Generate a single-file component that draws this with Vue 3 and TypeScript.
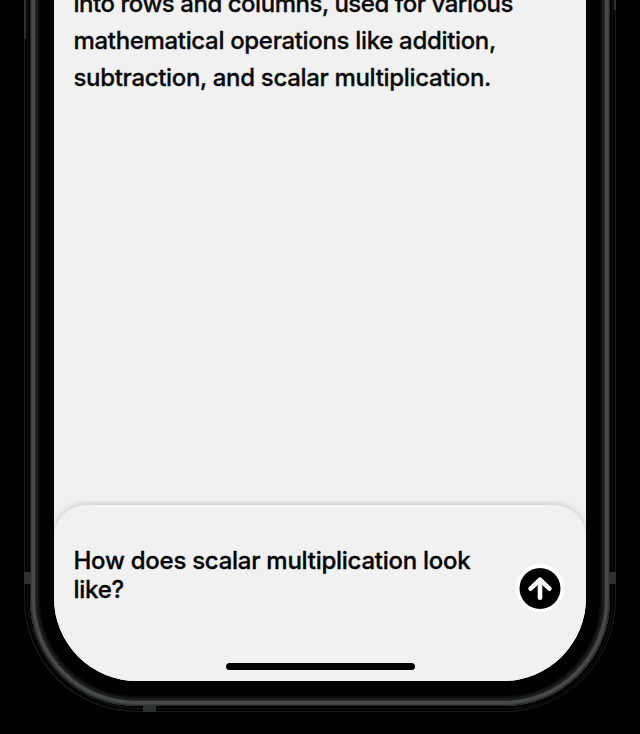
<script setup lang="ts">
import { ref } from 'vue'

const answer = ref<string[]>([
  'into rows and columns, used for various',
  'mathematical operations like addition,',
  'subtraction, and scalar multiplication.',
])
const question = ref<string[]>(['How does scalar multiplication look', 'like?'])
</script>

<template>
  <main class="stage">
    <div class="phone">
      <i class="seam side-button left"></i>
      <i class="seam side-button right"></i>
      <i class="seam band left"></i>
      <i class="seam band right"></i>
      <i class="seam base"></i>
      <div class="rail">
        <div class="screen">
          <section class="answer">
            <p v-for="(line, i) in answer" :key="i" :class="'answer-' + i">{{ line }}</p>
          </section>
          <section class="composer">
            <div class="entry">
              <div class="question">
                <p v-for="line in question" :key="line">{{ line }}</p>
              </div>
              <button class="send" type="button" aria-label="Send">
                <svg viewBox="0 0 42 42" width="42" height="42">
                  <circle cx="21" cy="21.4" r="20.5" fill="#000" />
                  <path d="M21 30.7V13M11.6 21.6L21 12.6L30.4 21.6" fill="none" stroke="#fff" stroke-width="4.6" stroke-linecap="round" stroke-linejoin="round" />
                </svg>
              </button>
            </div>
            <div class="home"></div>
          </section>
        </div>
      </div>
    </div>
  </main>
</template>

<style>
body {
  background: #000;
}
</style>

<style scoped>
.stage {
  width: 640px;
  height: 734px;
  overflow: hidden;
  background: #000;
  display: flex;
  justify-content: center;
  font-family: Inter, "Liberation Sans", sans-serif;
}
.phone {
  position: relative;
  box-sizing: border-box;
  width: 592px;
  height: 712px;
  padding: 0 6px 6px;
  border-radius: 0 0 112px 112px;
  box-shadow: inset 1px -1px 0 #191919, inset -1px 0 0 #191919, inset 3px -3px 0 #030303, inset -3px 0 0 #030303, inset 4px -4px 0 #131313, inset -4px 0 0 #131313;
}
.rail {
  box-sizing: border-box;
  width: 580px;
  height: 726px;
  margin-top: -20px;
  padding: 20px 24px 25px;
  border-radius: 0 0 106px 106px;
  background: #000;
  box-shadow: inset 0 0 0 1px #292929, inset 0 0 0 2px #3b3d3d, inset 0 0 0 5px #484a4a, inset 0 0 0 6px #292b2b, inset 0 0 0 7px #171717, inset 0 0 0 8px #1e1e1e, inset 0 0 0 10px #0c0c0c;
}
.screen {
  width: 532px;
  height: 681px;
  background: #f1f1f1;
  border-radius: 0 0 83px 83px;
  overflow: hidden;
  display: flex;
  flex-direction: column;
  justify-content: space-between;
}
.answer {
  margin-top: -15px;
  padding-left: 19.5px;
}
p {
  margin: 0;
  color: #090909;
  font-weight: 500;
  -webkit-text-stroke: 0.3px currentColor;
  white-space: nowrap;
}
.answer p {
  font-size: 24px;
  line-height: 37px;
  letter-spacing: -0.33px;
}
.answer .answer-0 {
  letter-spacing: -0.47px;
}
.composer {
  box-sizing: border-box;
  height: 176px;
  padding: 41px 25px 11px 19.5px;
  border-radius: 32px 32px 0 0;
  background: #f1f1f1;
  box-shadow: 0 -2px 5px rgba(0, 0, 0, 0.14);
  display: flex;
  flex-direction: column;
  justify-content: space-between;
}
.entry {
  display: flex;
  justify-content: space-between;
}
.question p {
  font-size: 24px;
  line-height: 29px;
  letter-spacing: -0.26px;
  color: #000;
}
.send {
  width: 42px;
  height: 42px;
  margin-top: 21px;
  padding: 0;
  border: 0;
  border-radius: 50%;
  background: #fff;
  box-shadow: 0 0 1px 3px #fff;
}
.send svg {
  display: block;
}
.home {
  align-self: center;
  width: 189px;
  height: 7px;
  margin-left: 5.5px;
  border-radius: 4px;
  background: #000;
}
.seam {
  position: absolute;
  background: #303232;
}
.side-button {
  top: 0;
  width: 2px;
  height: 39px;
}
.side-button.right {
  height: 10px;
}
.left {
  left: 0;
}
.right {
  right: 0;
}
.band {
  top: 572px;
  width: 7px;
  height: 12px;
}
.base {
  bottom: 0;
  left: 119px;
  width: 13px;
  height: 7px;
}
</style>
